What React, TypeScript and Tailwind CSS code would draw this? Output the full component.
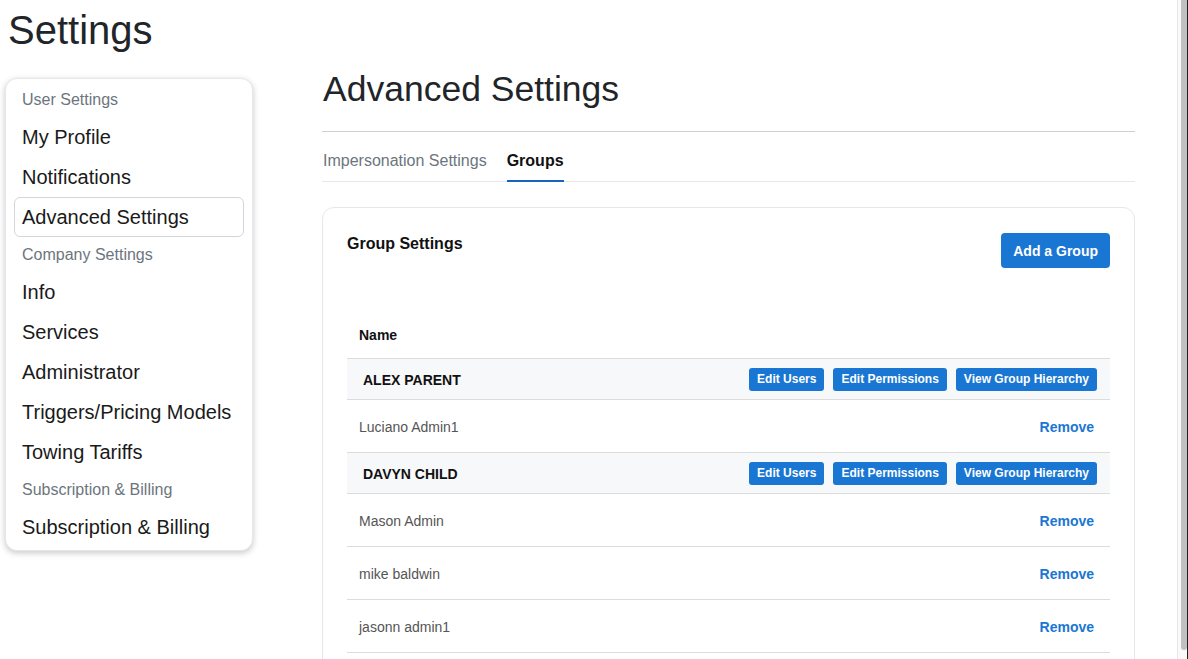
import React from 'react';

type Item = { label: string; kind: 'head' | 'link'; active?: boolean };

const menu: Item[] = [
  { label: 'User Settings', kind: 'head' },
  { label: 'My Profile', kind: 'link' },
  { label: 'Notifications', kind: 'link' },
  { label: 'Advanced Settings', kind: 'link', active: true },
  { label: 'Company Settings', kind: 'head' },
  { label: 'Info', kind: 'link' },
  { label: 'Services', kind: 'link' },
  { label: 'Administrator', kind: 'link' },
  { label: 'Triggers/Pricing Models', kind: 'link' },
  { label: 'Towing Tariffs', kind: 'link' },
  { label: 'Subscription & Billing', kind: 'head' },
  { label: 'Subscription & Billing', kind: 'link' },
];

const groups = [
  { name: 'ALEX PARENT', members: ['Luciano Admin1'] },
  { name: 'DAVYN CHILD', members: ['Mason Admin', 'mike baldwin', 'jasonn admin1'] },
];

const Sidebar: React.FC = () => (
  <nav className="w-[248px] shrink-0 self-start rounded-xl border border-gray-200 bg-white px-2 py-[3px] shadow-[0_2px_6px_rgba(0,0,0,0.22)]">
    {menu.map((m, i) =>
      m.kind === 'head' ? (
        <div key={i} className="flex h-[35px] items-center pl-2 text-base text-[#6c757d]">
          {m.label}
        </div>
      ) : (
        <div
          key={i}
          className={
            m.active
              ? 'flex h-10 items-center rounded-md border border-gray-300 pl-[7px] text-xl text-[#1a1a1a]'
              : 'flex h-10 items-center pl-2 text-xl text-[#1a1a1a]'
          }
        >
          {m.label}
        </div>
      )
    )}
  </nav>
);

const SmallButton: React.FC<{ children: React.ReactNode }> = ({ children }) => (
  <button className="h-[23px] rounded-[3px] bg-[#1976d2] px-2 text-xs font-bold text-white">{children}</button>
);

const GroupTable: React.FC = () => (
  <div className="mt-[43px]">
    <div className="flex h-12 items-center border-b border-[#dcdcdc] px-3 text-sm font-bold text-[#111]">Name</div>
    {groups.map((g) => (
      <div key={g.name}>
        <div className="flex h-[41px] items-center justify-between border-b border-[#dcdcdc] bg-[#f7f8fa] pl-4 pr-[13px]">
          <span className="pt-px text-sm font-bold text-[#111]">{g.name}</span>
          <div className="flex gap-[9px]">
            <SmallButton>Edit Users</SmallButton>
            <SmallButton>Edit Permissions</SmallButton>
            <SmallButton>View Group Hierarchy</SmallButton>
          </div>
        </div>
        {g.members.map((m) => (
          <div key={m} className="flex h-[53px] items-center justify-between border-b border-[#dcdcdc] pl-3 pr-4 pt-px">
            <span className="text-sm text-[#555]">{m}</span>
            <span className="text-sm font-bold text-[#1976d2]">Remove</span>
          </div>
        ))}
      </div>
    ))}
  </div>
);

export default function App() {
  return (
    <div className="flex h-[659px] overflow-hidden bg-white font-['Liberation_Sans',Arial,sans-serif] text-[#212529]">
      <div className="flex-1 overflow-hidden px-[5px]">
        <h1 className="mt-[6px] pl-[3px] text-[40px] leading-[48px]">Settings</h1>
        <div className="flex">
          <div className="mt-6">
            <Sidebar />
          </div>
          <main className="ml-[69px] w-[813px] shrink-0">
            <h2 className="mt-[14px] pl-px text-[35.5px] leading-[42px]">Advanced Settings</h2>
            <div className="mt-[21px] h-px bg-[#cfcfcf]" />
            <div className="mt-4 flex gap-5 border-b border-gray-200 pl-px text-base">
              <span className="pb-2 pt-px text-[#6c757d]">Impersonation Settings</span>
              <span className="-mb-px border-b-2 border-[#1565c0] pb-[6px] pt-px font-bold text-[#111]">Groups</span>
            </div>
            <section className="mt-[25px] rounded-xl border border-gray-200 p-6">
              <div className="flex items-start justify-between">
                <h3 className="text-base font-bold text-[#111]">Group Settings</h3>
                <button className="mt-px h-[35px] rounded-[4px] bg-[#1976d2] px-3 text-sm font-bold text-white">
                  Add a Group
                </button>
              </div>
              <GroupTable />
            </section>
          </main>
        </div>
      </div>
      <div className="flex w-[11px] shrink-0 border-l border-gray-200 bg-[#fafafa] pl-[3px]">
        <div className="h-[650px] w-[6px] rounded-b-sm bg-[#c1c1c1]" />
        <div className="w-px bg-[#222]" />
      </div>
    </div>
  );
}
